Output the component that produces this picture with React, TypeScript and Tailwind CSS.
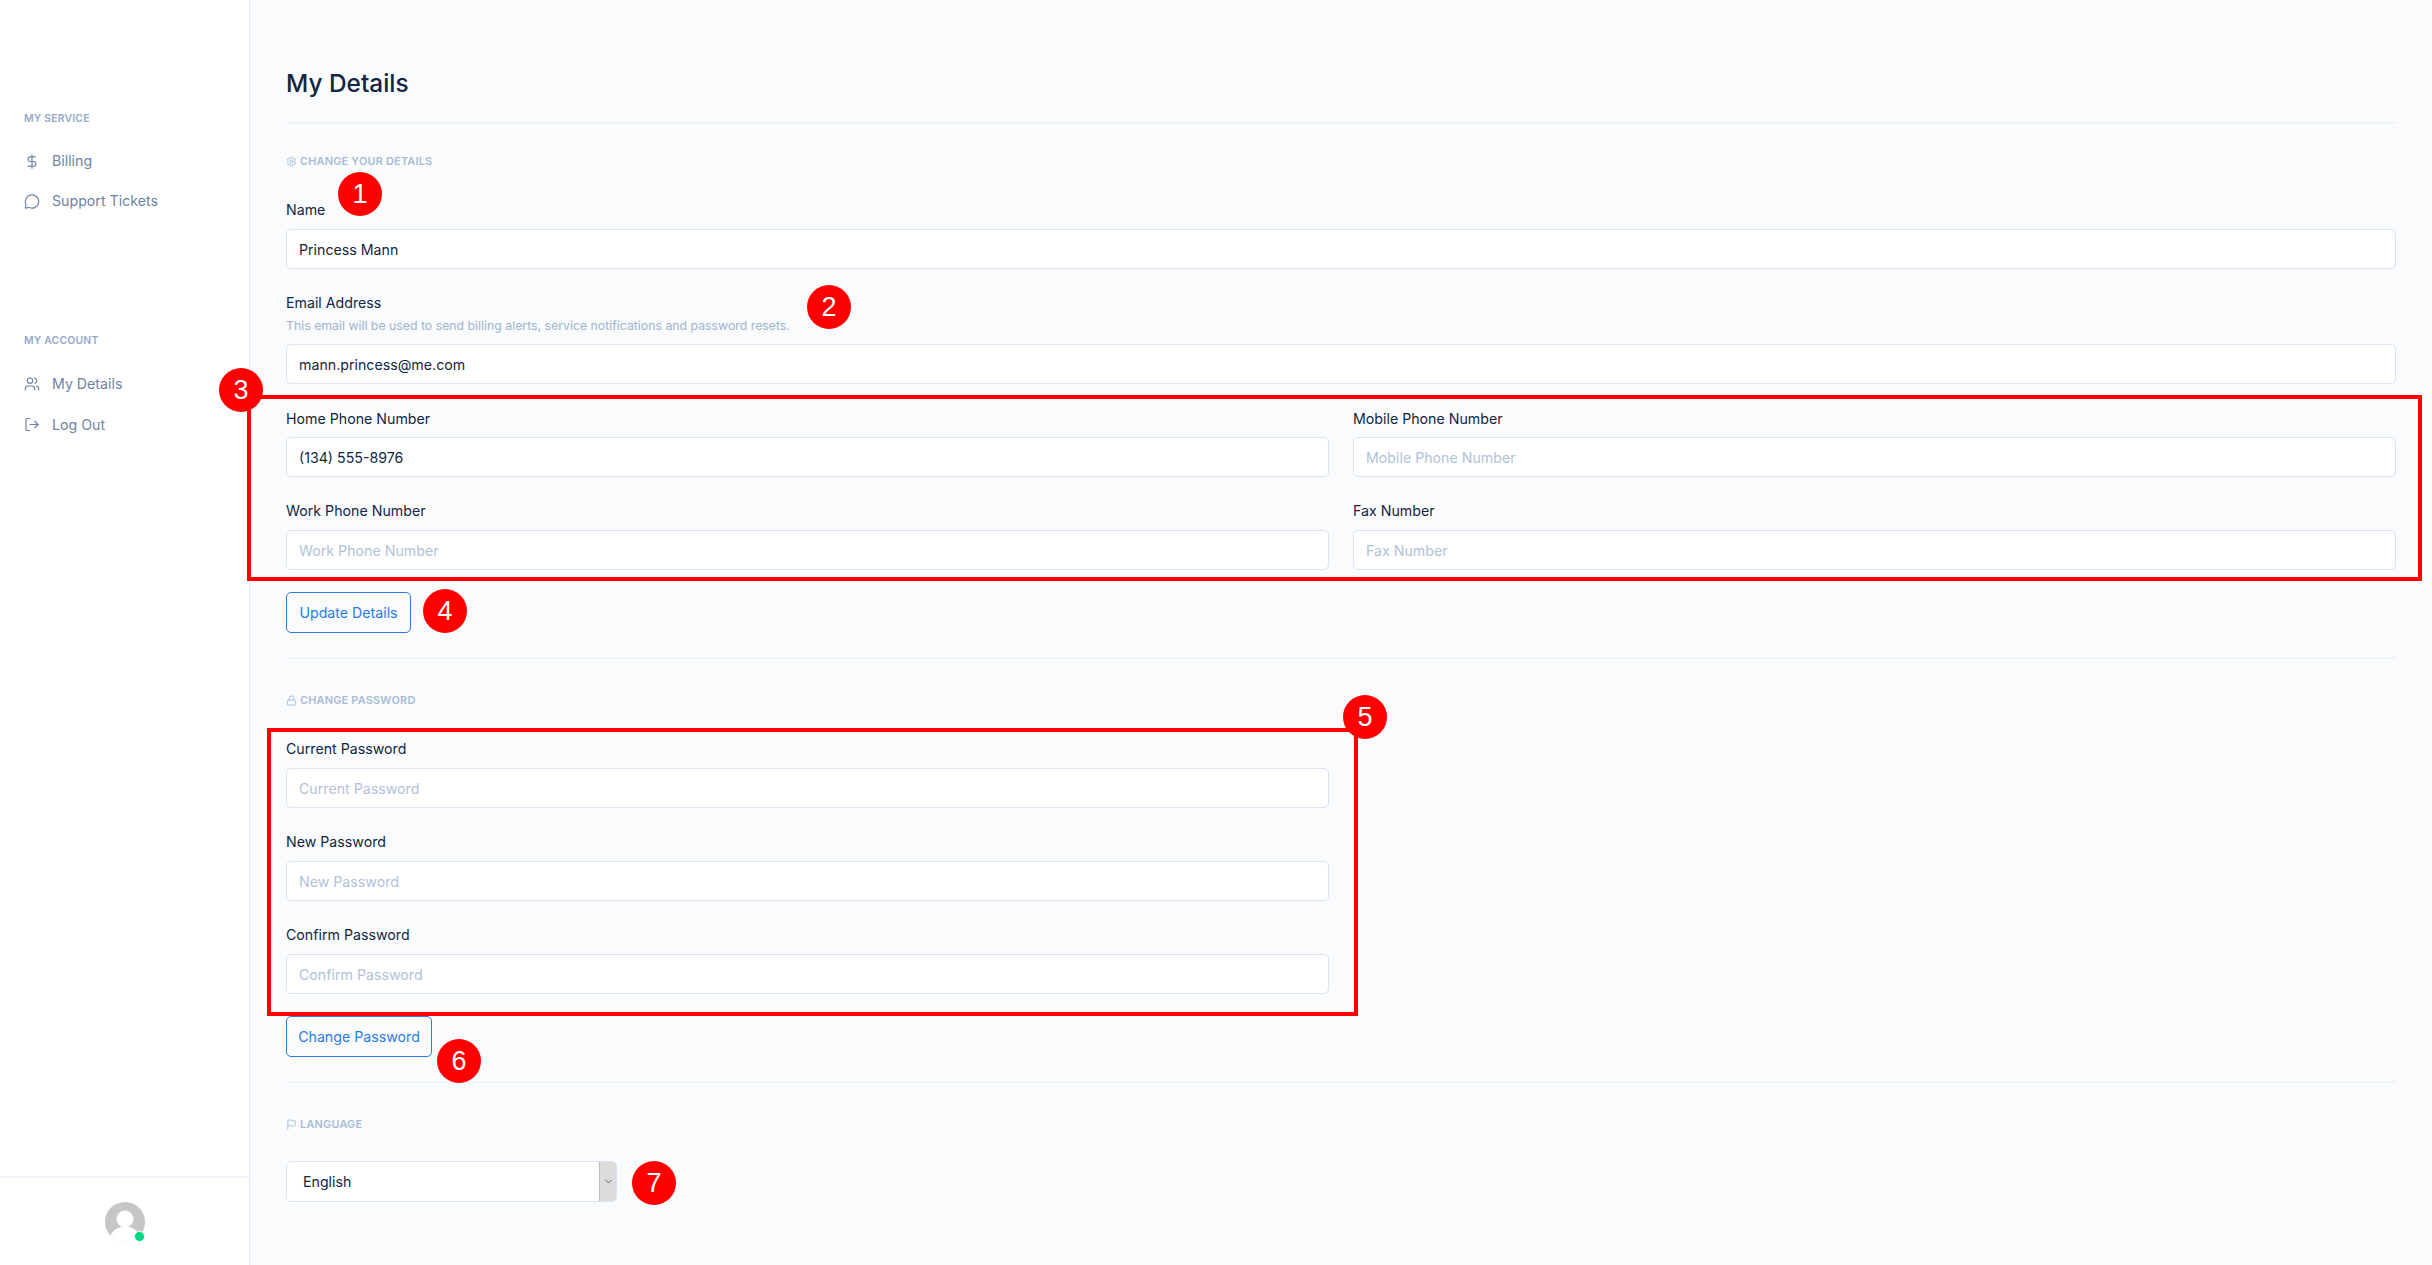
import React from "react";
import { DollarSign, MessageCircle, Users, LogOut, Settings, Lock, Flag, ChevronDown } from "lucide-react";

function NavItem({ icon, label, className = "h-10" }: { icon: React.ReactNode; label: string; className?: string }) {
  return (
    <a className={`flex items-center gap-[12px] pl-6 text-[14.2px] text-[#6e84a3] ${className}`}>
      <span className="flex w-4 justify-center">{icon}</span>
      {label}
    </a>
  );
}

function NavLabel({ text, className }: { text: string; className: string }) {
  return <div className={`h-4 pl-6 text-[10.4px] font-semibold uppercase leading-4 tracking-[0.02em] text-[#95aac9] ${className}`}>{text}</div>;
}

function SectionLabel({ icon, text, className }: { icon: React.ReactNode; text: string; className: string }) {
  return (
    <div className={`flex h-4 items-center gap-[3px] text-[10.9px] font-semibold uppercase leading-4 tracking-[0.02em] text-[#a9bbd5] ${className}`}>
      {icon}
      {text}
    </div>
  );
}

function Field({ label, value, placeholder, help, className, gap = "mt-[10px]" }: { label: string; value?: string; placeholder?: string; help?: string; className?: string; gap?: string }) {
  return (
    <div className={className}>
      <div className="h-5 text-[14.2px] leading-[22px] text-[#12263f]">{label}</div>
      {help && <div className="mt-[5px] h-4 text-[12.3px] leading-[18px] text-[#a0b3cf]">{help}</div>}
      <input
        readOnly
        value={value ?? ""}
        placeholder={placeholder}
        className={`${gap} block h-10 w-full rounded-[5px] border border-[#d9e3f1] bg-white px-3 text-[14.2px] text-[#12263f] outline-none placeholder:text-[#b1c2d9]`}
      />
    </div>
  );
}

function OutlineButton({ text, className }: { text: string; className: string }) {
  return (
    <button className={`flex h-[41px] items-center justify-center rounded-[5px] border border-[#2c7be5] text-[14.2px] text-[#2c7be5] ${className}`}>{text}</button>
  );
}

function Badge({ n, className }: { n: number; className: string }) {
  return (
    <div className={`absolute flex h-11 w-11 items-center justify-center rounded-full bg-[#ff0000] font-['Liberation_Sans',sans-serif] text-[27px] text-white ${className}`}>{n}</div>
  );
}

export default function App() {
  return (
    <div className="relative flex h-[1265px] w-[2432px] overflow-hidden bg-[#f9fbfd] font-['Inter',sans-serif]">
      <aside className="flex w-[250px] shrink-0 flex-col border-r border-[#e3ebf6] bg-white">
        <div className="flex-1 pt-[111px]">
          <NavLabel text="My Service" className="mb-[14px]" />
          <NavItem icon={<DollarSign size={19} strokeWidth={1.75} />} label="Billing" />
          <NavItem icon={<MessageCircle size={17} strokeWidth={1.75} />} label="Support Tickets" />
          <NavLabel text="My Account" className="mb-[15px] mt-[112px]" />
          <NavItem icon={<Users size={18} strokeWidth={1.75} />} label="My Details" />
          <NavItem icon={<LogOut size={17} strokeWidth={1.75} />} label="Log Out" className="h-[41px]" />
        </div>
        <div className="flex h-[89px] justify-center border-t-2 border-[#f1f4fa] pt-[24px]">
          <div className="relative h-10 w-10">
            <svg viewBox="0 0 40 40" className="h-10 w-10">
              <defs>
                <clipPath id="avatarClip"><circle cx="20" cy="20" r="20" /></clipPath>
              </defs>
              <g clipPath="url(#avatarClip)">
                <rect width="40" height="40" fill="#c6c6c6" />
                <circle cx="20" cy="17" r="8.5" fill="#fff" />
                <ellipse cx="20" cy="37" rx="15" ry="12.5" fill="#fff" />
              </g>
            </svg>
            <span className="absolute bottom-0 right-0 h-[11px] w-[11px] rounded-full border-[1.5px] border-white bg-[#00d97e]" />
          </div>
        </div>
      </aside>

      <main className="min-w-0 flex-1 px-9 pt-[67px]">
        <h1 className="h-8 text-[24.4px] font-medium leading-8 text-[#12263f]">My Details</h1>
        <div className="mt-[23px] h-[2px] bg-[#f0f3f9]" />
        <SectionLabel icon={<Settings size={11} strokeWidth={2} />} text="Change your details" className="mt-[29px]" />
        <Field label="Name" value="Princess Mann" className="mt-[30px]" />
        <Field label="Email Address" value="mann.princess@me.com" help="This email will be used to send billing alerts, service notifications and password resets." className="mt-[23px]" gap="mt-[11px]" />
        <div className="mt-6 grid grid-cols-2 gap-x-6 gap-y-[23px]">
          <Field label="Home Phone Number" value="(134) 555-8976" gap="mt-[9px]" />
          <Field label="Mobile Phone Number" placeholder="Mobile Phone Number" gap="mt-[9px]" />
          <Field label="Work Phone Number" placeholder="Work Phone Number" />
          <Field label="Fax Number" placeholder="Fax Number" />
        </div>
        <OutlineButton text="Update Details" className="mt-[22px] w-[125px]" />
        <div className="mt-6 h-[2px] bg-[#f0f3f9]" />
        <SectionLabel icon={<Lock size={11} strokeWidth={2} />} text="Change password" className="mt-[33px]" />
        <div className="w-[1043px]">
          <Field label="Current Password" placeholder="Current Password" className="mt-[30px]" />
          <Field label="New Password" placeholder="New Password" className="mt-[23px]" />
          <Field label="Confirm Password" placeholder="Confirm Password" className="mt-[23px]" />
        </div>
        <OutlineButton text="Change Password" className="mt-[22px] w-[146px]" />
        <div className="mt-6 h-[2px] bg-[#f0f3f9]" />
        <SectionLabel icon={<Flag size={11} strokeWidth={2} />} text="Language" className="mt-[33px]" />
        <div className="mt-[29px] flex h-[41px] w-[331px] overflow-hidden rounded-[5px] border border-[#d9e3f1] bg-white">
          <div className="flex flex-1 items-center pl-4 text-[14.2px] text-[#12263f]">English</div>
          <div className="flex w-[17px] items-center justify-center border-l border-[#bdbdbd] bg-[#dcdcdc] text-[#555]">
            <ChevronDown size={11} strokeWidth={2} />
          </div>
        </div>
      </main>

      <div className="absolute left-[247px] top-[395px] h-[186px] w-[2175px] border-4 border-[#ff0000]" />
      <div className="absolute left-[267px] top-[728px] h-[288px] w-[1091px] border-4 border-[#ff0000]" />
      <Badge n={1} className="left-[338px] top-[172px]" />
      <Badge n={2} className="left-[807px] top-[285px]" />
      <Badge n={3} className="left-[219px] top-[368px]" />
      <Badge n={4} className="left-[423px] top-[589px]" />
      <Badge n={5} className="left-[1343px] top-[695px]" />
      <Badge n={6} className="left-[437px] top-[1039px]" />
      <Badge n={7} className="left-[632px] top-[1161px]" />
    </div>
  );
}
